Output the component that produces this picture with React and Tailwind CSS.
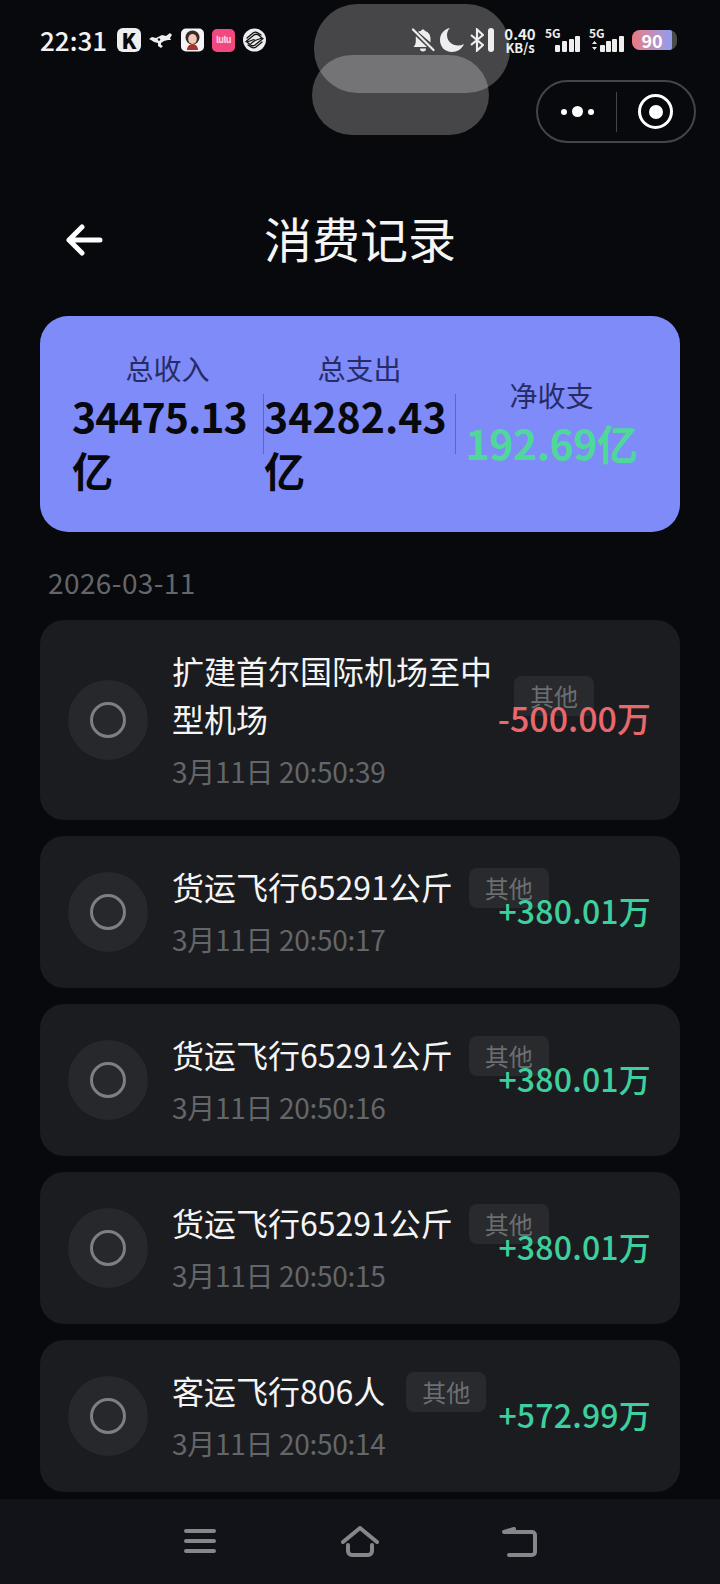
const FONT = "font-['Noto_Sans_CJK_SC','Noto_Sans',sans-serif]";

const RECORDS = [
  { name: "扩建首尔国际机场至中型机场", time: "3月11日 20:50:39", amount: "-500.00万", negative: true, gap: "gap-[16px]" },
  { name: "货运飞行65291公斤", time: "3月11日 20:50:17", amount: "+380.01万", gap: "gap-[16px]" },
  { name: "货运飞行65291公斤", time: "3月11日 20:50:16", amount: "+380.01万", gap: "gap-[16px]" },
  { name: "货运飞行65291公斤", time: "3月11日 20:50:15", amount: "+380.01万", gap: "gap-[16px]" },
  { name: "客运飞行806人", time: "3月11日 20:50:14", amount: "+572.99万", gap: "gap-[21px]" },
];

function Signal({ arrows = false }) {
  return (
    <div className="relative h-[24px] w-[36px]">
      <span className="absolute left-0 top-[-2px] text-[12px] font-bold leading-[14px] text-[#eeeeee]">5G</span>
      <svg className="absolute left-0 top-0" width="36" height="24" viewBox="0 0 36 24" fill="#eeeeee">
        {arrows && <path d="M3 16l2.500-3L8 16zM3 19h5l-2.500 3z" />}
        <rect x={arrows ? 11 : 10} y="17" width="5" height="7" rx="1" />
        <rect x="17" y="13" width="5" height="11" rx="1" />
        <rect x={arrows ? 23 : 24} y="11" width="5" height="13" rx="1" />
        <rect x="30" y="8" width="5" height="16" rx="1" />
      </svg>
    </div>
  );
}

function StatusBar() {
  return (
    <div className="flex h-[80px] items-start pl-[40px] pr-[43px] pt-[24px]">
      <span className="w-[66px] text-[26px] font-medium leading-[32px] text-[#f2f2f2]">22:31</span>
      <div className="ml-[11px] mt-[4px] flex items-center gap-[8px]">
        <div className="flex h-[24px] w-[24px] items-center justify-center rounded-[6px] bg-[#eeeeee] text-[21px] font-black leading-none text-[#0a0a0c]">
          K
        </div>
        <svg width="24" height="24" viewBox="0 0 24 24" fill="#eeeeee">
          <path d="M0 11l3-2 4 1 6-3 4 1 4-3 2 2-2 3 1 2-3 0-4 1-3 2 0 2 2 1-2 2-3-2 0-3-4-1-3-2z" />
          <circle cx="10" cy="11.500" r="1.200" fill="#08090c" />
        </svg>
        <svg width="23" height="24" viewBox="0 0 23 24">
          <rect width="23" height="23" y="0.500" rx="5" fill="#f4f4f4" />
          <ellipse cx="11.500" cy="9.500" rx="7" ry="7" fill="#3a2a28" />
          <ellipse cx="11.500" cy="11" rx="4.300" ry="5" fill="#f0c9b4" />
          <path d="M6 22c0-4 3-6 5.500-6s5.500 2 5.500 6z" fill="#a8322c" />
        </svg>
        <div className="flex h-[23px] w-[23px] items-center justify-center rounded-[5px] bg-[#f0487f] text-[9px] font-bold tracking-[-0.5px] text-[#ffd9e6]">
          lulu
        </div>
        <svg width="23" height="24" viewBox="0 0 23 24" fill="none">
          <circle cx="11.500" cy="12" r="11.500" fill="#eeeeee" />
          <path d="M4 10l6-5c2-1.500 3.500-1 5 0l3 2M3 13.500l8-6.500c1.500-1 3-1 4.500 0l3.500 3-7 2.500-4 3M20 10.500l-8 6.500c-1.500 1-3 1-4.500 0L4 14l7-2.500M19 14l-6 5c-2 1.500-3.500 1-5 0l-3-2" stroke="#111" strokeWidth="1.300" strokeLinecap="round" strokeLinejoin="round" />
        </svg>
      </div>
      <div className="ml-auto mt-[4px] flex items-start">
        <svg className="z-10 mr-[5px]" width="24" height="24" viewBox="0 0 24 24" fill="#eeeeee">
          <path d="M12 1.500c1 0 1.800.7 2 1.600 3.500 1 5.500 4 5.500 7.500v4L7 3.700c.8-.4 1.500-.6 3-.8.200-.800 1-1.400 2-1.400zM4.800 8.200L16 19H2.500c1.500-1.500 2.300-3.500 2.300-6zM9 20.500h6a3 3 0 0 1-6 0z" />
          <path d="M2 1.500l20.500 20.500" stroke="#eeeeee" strokeWidth="2.200" strokeLinecap="round" />
        </svg>
        <svg className="z-10 mr-[6px]" width="24" height="24" viewBox="0 0 24 24" fill="#eeeeee">
          <path d="M10 0C4 1 0 6 0 12c0 7 5 12 12 12 5 0 10-3 12-8-2 1-4 1.500-6 1.500C12 17.500 7 13 7 7c0-3 1-5 3-7z" />
        </svg>
        <svg className="z-10 mr-[4px]" width="14" height="24" viewBox="0 0 14 24" fill="none" stroke="#eeeeee" strokeWidth="2.200">
          <path d="M1 7l12 10-6 5.500V1.500l6 5.500L1 17" />
        </svg>
        <div className="z-10 mr-[10px] h-[24px] w-[6px] rounded-[3px] bg-[#eeeeee]" />
        <div className="z-10 mr-[9px] mt-[-2px] flex w-[32px] flex-col items-center font-bold text-[#eeeeee]">
          <span className="text-[15px] leading-[16px]">0.40</span>
          <span className="mt-[-1px] text-[13px] leading-[14px]">KB/s</span>
        </div>
        <div className="flex gap-[8px]">
          <Signal />
          <Signal arrows />
        </div>
        <div className="ml-[7px] mt-[2px] flex h-[20px] w-[45px] items-center rounded-[8px] bg-[#4a4a4a]">
          <div className="flex h-full w-[40px] items-center justify-center rounded-l-[8px] rounded-r-[2px] bg-gradient-to-r from-[#e9787f] to-[#8f9bf0] text-[18px] font-bold leading-[20px] text-white">
            90
          </div>
        </div>
      </div>
    </div>
  );
}

function Capsule() {
  return (
    <div className="flex h-[63px] justify-end pr-[24px]">
      <div className="flex w-[160px] items-center rounded-full border-2 border-[#444548]">
        <div className="flex w-[78px] items-center justify-center gap-[5px]">
          <span className="h-[6px] w-[6px] rounded-full bg-white" />
          <span className="h-[11px] w-[11px] rounded-full bg-white" />
          <span className="h-[6px] w-[6px] rounded-full bg-white" />
        </div>
        <div className="h-[40px] w-[1px] bg-[#444548]" />
        <div className="flex flex-1 items-center justify-center">
          <div className="flex h-[35px] w-[35px] items-center justify-center rounded-full border-[3px] border-white">
            <span className="h-[14px] w-[14px] rounded-full bg-white" />
          </div>
        </div>
      </div>
    </div>
  );
}

function Header() {
  return (
    <div className="relative flex h-[173px] items-center justify-center pt-[15px]">
      <svg className="absolute left-[64px] top-[77px]" width="40" height="40" viewBox="0 0 40 40" fill="none" stroke="#ffffff" strokeWidth="5" strokeLinecap="round" strokeLinejoin="round">
        <path d="M36 20H5M18 7L5 20l13 13" />
      </svg>
      <h1 className="text-[48px] font-normal leading-[64px] text-[#f5f5f5]">消费记录</h1>
    </div>
  );
}

function SummaryColumn({ label, value, tracking = "", green = false }) {
  return (
    <div className="flex w-[191px] flex-col items-center pb-[4px]">
      <span className="text-[28px] leading-[40px] text-[#262c66]">{label}</span>
      <span className={`text-left text-[41px] font-bold leading-[54px] ${tracking} ${green ? "text-[#4fd89a]" : "text-[#08090c]"}`}>
        {value}
      </span>
    </div>
  );
}

function Summary() {
  return (
    <div className="mx-[40px] flex h-[216px] items-center rounded-[28px] bg-[#7f8bf9] px-[32px]">
      <SummaryColumn label="总收入" value="34475.13亿" tracking="tracking-[-1px]" />
      <div className="h-[60px] w-[1px] shrink-0 bg-[#5f68b8]" />
      <SummaryColumn label="总支出" value="34282.43亿" />
      <div className="h-[60px] w-[1px] shrink-0 bg-[#5f68b8]" />
      <SummaryColumn label="净收支" value="192.69亿" tracking="tracking-[-0.5px]" green />
    </div>
  );
}

function RecordCard({ record }) {
  return (
    <div className="relative flex items-center gap-[24px] rounded-[24px] bg-[#1b1c1f] px-[28px] py-[28px]">
      <div className="flex h-[80px] w-[80px] shrink-0 items-center justify-center rounded-full bg-[#26282b]">
        <div className="h-[36px] w-[36px] rounded-full border-[3px] border-[#7c8083]" />
      </div>
      <div className="pb-[1px]">
        <div className={`flex items-center ${record.gap}`}>
          <span className="max-w-[326px] -translate-y-[2px] text-[32px] leading-[48px] text-[#f5f5f5]">{record.name}</span>
          <span className="flex h-[40px] w-[80px] shrink-0 items-center justify-center rounded-[8px] bg-[#282a2d] text-[24px] text-[#6b6e72]">
            其他
          </span>
        </div>
        <div className="mt-[7px] text-[28px] leading-[40px] tracking-[-0.3px] text-[#63666a]">{record.time}</div>
      </div>
      <span className={`absolute right-[29px] top-[calc(50%-2px)] -translate-y-1/2 font-medium leading-[48px] ${record.negative ? "text-[34px] text-[#e8686b]" : "text-[32px] tracking-[0.2px] text-[#3ecf9e]"}`}>
        {record.amount}
      </span>
    </div>
  );
}

function NavBar() {
  return (
    <div className="mt-auto flex h-[85px] items-start justify-center bg-[#111318] pt-[27px]">
      <svg width="428" height="32" viewBox="0 0 428 32" fill="none" stroke="#85878b" strokeWidth="4" strokeLinecap="round" strokeLinejoin="round">
        <path d="M40 5h28M40 15h28M40 25h28" />
        <path d="M197 16L214 2l17 14M202 19v6a4 4 0 0 0 4 4h16a4 4 0 0 0 4-4v-6" />
        <path d="M360 6h26a3 3 0 0 1 3 3v17a3 3 0 0 1-3 3h-23M358 6l10-3" />
      </svg>
    </div>
  );
}

export default function App() {
  return (
    <div className={`relative flex h-[1584px] w-[720px] flex-col overflow-hidden bg-[#08090c] ${FONT}`}>
      <StatusBar />
      <Capsule />
      <Header />
      <Summary />
      <div className="ml-[48px] mt-[30px] text-[28px] leading-[40px] tracking-[0.4px] text-[#646669]">2026-03-11</div>
      <div className="mx-[40px] mt-[18px] flex flex-col gap-[16px]">
        {RECORDS.map((record) => (
          <RecordCard key={record.time} record={record} />
        ))}
      </div>
      <NavBar />
      <div className="absolute left-[314px] top-[4px] h-[89px] w-[196px] rounded-[44px] bg-white/25" />
      <div className="absolute left-[312px] top-[55px] h-[80px] w-[177px] rounded-[40px] bg-white/25" />
    </div>
  );
}
